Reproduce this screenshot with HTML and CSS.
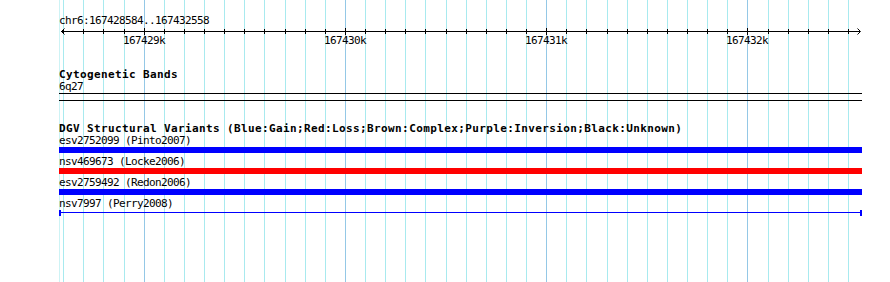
FILE: index.html
```html
<!DOCTYPE html>
<html lang="en">
    <head>
        <meta charset="UTF-8">
        <title>chr6:167428584..167432558</title>
        <link rel="stylesheet" href="styles.css">
    </head>
    <body>
        <div class="panel">
            <svg class="grid" width="890" height="282" shape-rendering="crispEdges">
                <path class="edge" d="M59.5 0V282"/>
                <path class="minor" d="M63.5 0V282M83.5 0V282M103.5 0V282M124.5 0V282M164.5 0V282M184.5 0V282M204.5 0V282M224.5 0V282M244.5 0V282M264.5 0V282M285.5 0V282M305.5 0V282M325.5 0V282M365.5 0V282M385.5 0V282M405.5 0V282M425.5 0V282M446.5 0V282M466.5 0V282M486.5 0V282M506.5 0V282M526.5 0V282M566.5 0V282M586.5 0V282M607.5 0V282M627.5 0V282M647.5 0V282M667.5 0V282M687.5 0V282M707.5 0V282M727.5 0V282M768.5 0V282M788.5 0V282M808.5 0V282M828.5 0V282M848.5 0V282"/>
                <path class="major" d="M144.5 0V282M345.5 0V282M546.5 0V282M747.5 0V282"/>
            </svg>

            <div class="locus">chr6:167428584..167432558</div>
            <svg class="scale" width="804" height="19" viewBox="59 27 804 19" shape-rendering="crispEdges">
                <path d="M61 31.5H860"/>
                <path d="M63.5 29V34M83.5 29V34M103.5 29V34M124.5 29V34M164.5 29V34M184.5 29V34M204.5 29V34M224.5 29V34M244.5 29V34M264.5 29V34M285.5 29V34M305.5 29V34M325.5 29V34M365.5 29V34M385.5 29V34M405.5 29V34M425.5 29V34M446.5 29V34M466.5 29V34M486.5 29V34M506.5 29V34M526.5 29V34M566.5 29V34M586.5 29V34M607.5 29V34M627.5 29V34M647.5 29V34M667.5 29V34M687.5 29V34M707.5 29V34M727.5 29V34M768.5 29V34M788.5 29V34M808.5 29V34M828.5 29V34M848.5 29V34"/>
                <path d="M144.5 28V35M345.5 28V35M546.5 28V35M747.5 28V35"/>
                <path class="arrow" d="M64.5 28.5L61.5 31.5L64.5 34.5M857.5 28.5L860.5 31.5L857.5 34.5" shape-rendering="auto"/>
                <text x="144" y="44">167429k</text>
                <text x="345" y="44">167430k</text>
                <text x="546" y="44">167431k</text>
                <text x="747" y="44">167432k</text>
            </svg>

            <section class="track">
                <h2 class="track-title">Cytogenetic Bands</h2>
                <div class="label">6q27</div>
                <div class="band"></div>
            </section>

            <section class="track dgv">
                <h2 class="track-title">DGV Structural Variants (Blue:Gain;Red:Loss;Brown:Complex;Purple:Inversion;Black:Unknown)</h2>
                <div class="feature">
                    <div class="label">esv2752099 (Pinto2007)</div>
                    <div class="bar gain"></div>
                </div>
                <div class="feature">
                    <div class="label">nsv469673 (Locke2006)</div>
                    <div class="bar loss"></div>
                </div>
                <div class="feature">
                    <div class="label">esv2759492 (Redon2006)</div>
                    <div class="bar gain"></div>
                </div>
                <div class="feature">
                    <div class="label">nsv7997 (Perry2008)</div>
                    <div class="span"></div>
                </div>
            </section>
        </div>
    </body>
</html>
```

FILE: styles.css
```css
body {
    background: #fff;
    color: #000;
    font-family: "DejaVu Sans Mono", monospace;
    font-size: 11px;
    letter-spacing: -0.62px;
    margin: 0;
}
.panel {
    background: #fff;
    box-sizing: border-box;
    height: 282px;
    isolation: isolate;
    overflow: hidden;
    padding: 15px 0 0 59px;
    position: relative;
    width: 890px;
}
.grid {
    left: 0;
    position: absolute;
    top: 0;
    z-index: -1;
}
.grid path {
    fill: none;
    stroke-width: 1;
}
.grid .edge {
    stroke: #cdf3f5;
}
.grid .minor {
    stroke: #a8eaef;
}
.grid .major {
    stroke: #94c8e6;
}
.locus {
    line-height: 12px;
}
.scale {
    display: block;
}
.scale path {
    fill: none;
    stroke: #000;
    stroke-width: 1;
}
.scale text {
    fill: #000;
    font-size: 11px;
    text-anchor: middle;
}
.track {
    width: 803px;
}
.track-title {
    font-size: 11px;
    font-weight: bold;
    letter-spacing: 0.38px;
    line-height: 13px;
    margin: 22px 0 0;
    white-space: nowrap;
}
.dgv .track-title {
    margin-top: 21px;
}
.label {
    line-height: 12px;
    white-space: nowrap;
}
.band {
    border-bottom: 1px solid #000;
    border-top: 1px solid #000;
    height: 6px;
}
.feature + .feature {
    margin-top: 3px;
}
.bar {
    height: 6px;
}
.gain {
    background: #00f;
}
.loss {
    background: #f00;
}
.span {
    background: linear-gradient(#00f, #00f) 0 2px / 100% 1px no-repeat;
    border-left: 2px solid #00f;
    border-right: 2px solid #00f;
    height: 6px;
}
```
